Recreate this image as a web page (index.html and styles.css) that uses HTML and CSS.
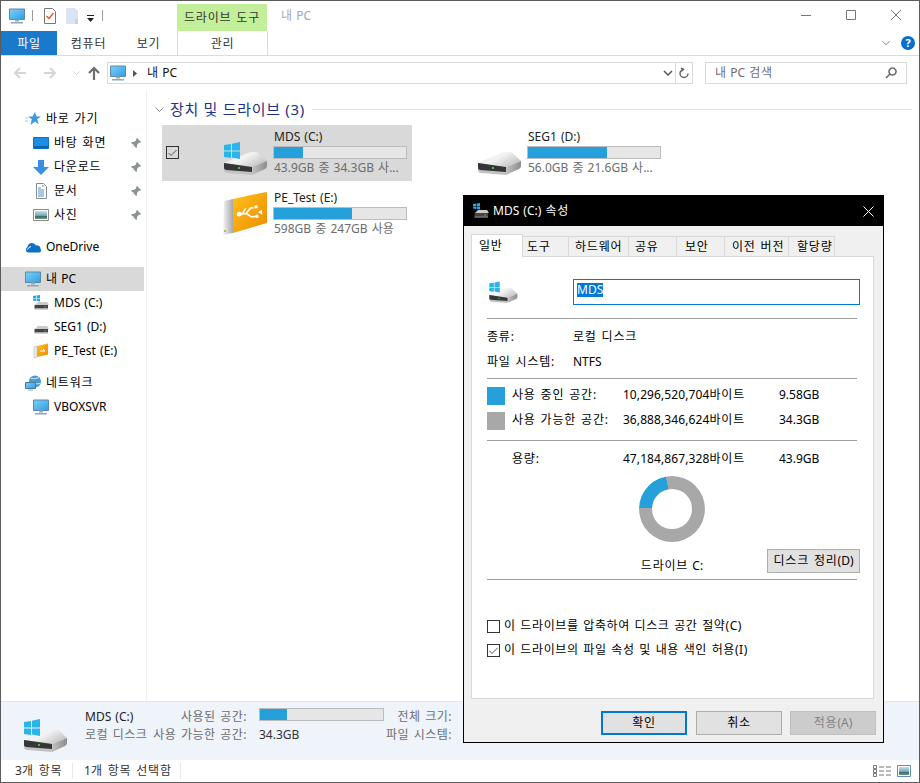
FILE: index.html
```html
<!DOCTYPE html>
<html lang="ko">
<head>
  <meta charset="UTF-8" />
  <title>내 PC</title>
  <link rel="stylesheet" href="styles.css">
</head>
<body>
  <!-- Shared icons -->
  <svg class="defs" aria-hidden="true">
    <defs>
      <linearGradient id="screen" x1="0" y1="0" x2="1" y2="1">
        <stop offset="0" stop-color="#7fd0f7" />
        <stop offset="1" stop-color="#2a9fe6" />
      </linearGradient>
      <linearGradient id="top-face" x1="0" y1="0" x2="1" y2="0.6">
        <stop offset="0" stop-color="#e2e2e2" />
        <stop offset="0.5" stop-color="#f4f4f4" />
        <stop offset="1" stop-color="#c4c4c4" />
      </linearGradient>
      <linearGradient id="side-face" x1="0" y1="0" x2="1" y2="0">
        <stop offset="0" stop-color="#c2c2c2" />
        <stop offset="1" stop-color="#8c8c8c" />
      </linearGradient>
      <linearGradient id="usb-face" x1="0" y1="0" x2="1" y2="1">
        <stop offset="0" stop-color="#ffc21a" />
        <stop offset="1" stop-color="#ee8a00" />
      </linearGradient>
      <linearGradient id="usb-spine" x1="0" y1="0" x2="1" y2="0">
        <stop offset="0" stop-color="#f4f4f4" />
        <stop offset="1" stop-color="#a8a8a8" />
      </linearGradient>
      <linearGradient id="photo" x1="0" y1="0" x2="0" y2="1">
        <stop offset="0" stop-color="#bfe0f2" />
        <stop offset="0.55" stop-color="#7fa8b8" />
        <stop offset="0.7" stop-color="#3f6b55" />
        <stop offset="1" stop-color="#6f9a88" />
      </linearGradient>
    </defs>
    <symbol id="drive" viewBox="0 0 46 38">
      <path d="M2 23 27 12.500q2-.5 4-.5l5 .5 9 8.500-15 6z" fill="url(#top-face)" />
      <path d="M30 27l15-6v5q0 2-2 3l-13 6z" fill="url(#side-face)" />
      <path d="M2 23l28 4v8L5 33q-3-.5-3-3z" fill="#c2c2c2" />
      <path d="M2 23l28 4v5L4 30q-2-.3-2-2z" fill="#363636" />
      <circle cx="17" cy="28" r="1.100" fill="#54d454" />
    </symbol>
    <symbol id="win" viewBox="0 0 46 38">
      <path d="M2 5l7-1v6.400H2zM10 3.800 18 2v8.400h-8zM2 11.400h7V18l-7-1zM10 11.400h8V19l-8-1.400z" fill="#29b4ea" />
    </symbol>
    <symbol id="usb" viewBox="0 0 46 46">
      <path d="M2 10l9-2v34l-10 2z" fill="url(#usb-spine)" />
      <path d="M11 8 44 1q1 0 1 1v29q0 1-1 1.300L11 42z" fill="url(#usb-face)" />
      <circle cx="3" cy="40" r="1" fill="#a3b21a" />
      <g transform="translate(0 -3) rotate(-6 28 24)">
        <path d="M17 25h7l5-5h3M24 25l5 4h4M20 25l4-5" fill="none" stroke="#fff" stroke-width="1.600" />
        <path d="M36 25l4-2v5zM33 18h3v3h-3z" fill="#fff" />
        <circle cx="17" cy="25" r="2.400" fill="#fff" />
        <circle cx="34.500" cy="29" r="1.800" fill="#fff" />
      </g>
    </symbol>
    <symbol id="pc" viewBox="0 0 16 15">
      <path d="M.5.500h15v10.500H.5z" fill="url(#screen)" stroke="#5c87a8" />
      <path d="M6 11h4v2H6z" fill="#9ab" />
      <path d="M2 13.500h12V15H2z" fill="#8fa6b8" />
    </symbol>
    <symbol id="pin" viewBox="0 0 10 10">
      <path d="M6 0l4 4-1 1-1-.4L6 7v2L5 10 2.800 7.200 0 10l2.800-3.200L0 5l1-1h2l2.400-2L5 1z" fill="#8b9296" />
    </symbol>
    <symbol id="small-drive" viewBox="0 0 16 16">
      <path d="M2 10l3-3h9l2 3z" fill="#c9c9c9" />
      <path d="M1.500 10h13.500v3.500H1.500z" fill="#444" />
      <path d="M1.500 13.500h13.500v1H1.500z" fill="#aaa" />
      <path d="M11.500 11.500h1.500v1h-1.500z" fill="#3fd83f" />
    </symbol>
    <symbol id="small-win" viewBox="0 0 16 16">
      <path d="M0 1l3-.4V3H0zM3.600.500 7 0v3H3.600zM0 3.600h3V6L0 5.600zM3.600 3.600H7v3L3.600 6z" fill="#20a8e8" />
    </symbol>
  </svg>

  <div class="window">
    <header class="titlebar">
      <div class="quick">
        <svg class="ico-16"><use href="#pc" /></svg>
        <span class="qsep"></span>
        <svg class="qdoc" viewBox="0 0 12 16">
          <path d="M.5.500h8l3 3v12H.5z" fill="#fff" stroke="#777" />
          <path d="M2.500 8l2.500 2.500L9.500 5" fill="none" stroke="#e2541c" stroke-width="1.300" />
        </svg>
        <svg class="qblank" viewBox="0 0 12 16">
          <path d="M0 0h9l3 3v13H0z" fill="#dbe4f2" />
          <path d="M9 11h3v5H9z" fill="#c8d2e2" />
        </svg>
        <svg class="qdrop" viewBox="0 0 7 7">
          <path d="M0 0h7v1H0zM0 3h7L3.500 7z" fill="#222" />
        </svg>
        <span class="qsep qsep-end"></span>
      </div>
      <div class="context-tab ko">드라이브 도구</div>
      <div class="window-name">내 PC</div>
      <div class="controls">
        <svg class="ctl" viewBox="0 0 10 10"><path d="M0 5.500h10" stroke="#777" fill="none" /></svg>
        <svg class="ctl" viewBox="0 0 10 10"><path d="M.5.500h9v9h-9z" stroke="#777" fill="none" /></svg>
        <svg class="ctl" viewBox="0 0 10 10"><path d="M0 0l10 10M10 0 0 10" stroke="#777" fill="none" /></svg>
      </div>
    </header>

    <nav class="ribbon">
      <div class="tab tab-file ko">파일</div>
      <div class="tab tab-computer ko">컴퓨터</div>
      <div class="tab tab-view ko">보기</div>
      <div class="tab tab-manage ko">관리</div>
      <svg class="ribbon-chevron" viewBox="0 0 8 4"><path d="M.3.300 4 3.700 7.700.300" fill="none" stroke="#8a8a8a" /></svg>
      <div class="help">?</div>
    </nav>

    <div class="navbar">
      <div class="nav-buttons">
        <svg class="nav-arrow" viewBox="0 0 12 12"><path d="M12 6H1M6 1 1 6l5 5" fill="none" stroke="#d6d6d6" stroke-width="2" /></svg>
        <svg class="nav-arrow" viewBox="0 0 12 12"><path d="M0 6h11M6 1l5 5-5 5" fill="none" stroke="#d6d6d6" stroke-width="2" /></svg>
        <svg class="nav-recent" viewBox="0 0 7 5"><path d="M.5.500 3.500 3.500 6.500.500" fill="none" stroke="#d6d6d6" /></svg>
        <svg class="nav-up" viewBox="0 0 12 14"><path d="M6 14V2M1 7l5-5 5 5" fill="none" stroke="#6e6e6e" stroke-width="2.200" /></svg>
      </div>
      <div class="address">
        <svg class="ico-16"><use href="#pc" /></svg>
        <svg class="crumb" viewBox="0 0 4 7"><path d="M0 0l4 3.500L0 7z" fill="#555" /></svg>
        <span class="address-text">내 PC</span>
        <svg class="addr-drop" viewBox="0 0 10 6"><path d="M1 1l4 4 4-4" fill="none" stroke="#555" stroke-width="1.500" /></svg>
        <div class="refresh">
          <svg viewBox="0 0 12 12" class="refresh-ico"><path d="M6 2.500a4 4 0 1 1-4 4M9 1 6.500 2.500 9 4.500" fill="none" stroke="#666" stroke-width="1.500" transform="matrix(-1 0 0 1 12 0)" /></svg>
        </div>
      </div>
      <div class="search">
        <span>내 PC <span class="ko">검색</span></span>
        <svg class="search-ico" viewBox="0 0 12 12"><path d="M7.500 1a3.500 3.500 0 1 0 .01 0zM5 7 1 11" fill="none" stroke="#666" stroke-width="1.500" /></svg>
      </div>
    </div>

    <div class="main">
      <aside class="sidebar">
        <div class="side-group">
          <div class="side-row">
            <svg class="ico-16" viewBox="0 0 16 16"><path d="M10 1l1.500 4.500H16l-3.700 2.800 1.300 5L10 10.500 5.500 14l1.300-5.700L3 5.500h4.500z" fill="#3a9be0" /><path d="M0 7h3M0 10h3" stroke="#9cc8ea" /></svg>
            <span class="ko">바로 가기</span>
          </div>
          <div class="side-row child">
            <svg class="ico-16" viewBox="0 0 16 14"><path d="M.5 1.500h15v11H.5z" fill="#1c8ee6" stroke="#0f6fc0" /><path d="M1 10h14v2H1z" fill="#0a63b0" /></svg>
            <span class="ko">바탕 화면</span>
            <svg class="pin"><use href="#pin" /></svg>
          </div>
          <div class="side-row child">
            <svg class="ico-16" viewBox="0 0 16 16"><path d="M5 1h6v7h5l-8 8-8-8h5z" fill="#3a8fe0" /></svg>
            <span class="ko">다운로드</span>
            <svg class="pin"><use href="#pin" /></svg>
          </div>
          <div class="side-row child">
            <svg class="ico-16" viewBox="0 0 16 16"><path d="M3.500.500h7l3 3v12h-10z" fill="#fff" stroke="#8a8a8a" /><path d="M5 5h3M9 3h2M5 7h6M5 9h6M5 11h6M5 13h6" stroke="#4a90c8" /></svg>
            <span class="ko">문서</span>
            <svg class="pin"><use href="#pin" /></svg>
          </div>
          <div class="side-row child">
            <svg class="ico-16" viewBox="0 0 16 14"><path d="M.5 1.500h15v11H.5z" fill="#fff" stroke="#8a8a8a" /><path d="M2 3h12v8H2z" fill="url(#photo)" /></svg>
            <span class="ko">사진</span>
            <svg class="pin"><use href="#pin" /></svg>
          </div>
        </div>
        <div class="side-group">
          <div class="side-row">
            <svg class="ico-16" viewBox="0 0 16 12"><path d="M3 11.500A3 3 0 0 1 2.500 6a4.500 4.500 0 0 1 8.500-1.500 3.500 3.500 0 0 1 4.500 3.500A2 2 0 0 1 14 11.500z" fill="#0f70c8" /><path d="M6 5.500a5 5 0 0 0-3.500 3" stroke="#fff" fill="none" /></svg>
            <span>OneDrive</span>
          </div>
        </div>
        <div class="side-group">
          <div class="side-row selected">
            <svg class="ico-16"><use href="#pc" /></svg>
            <span>내 PC</span>
          </div>
          <div class="side-row child">
            <svg class="ico-16"><use href="#small-drive" /><use href="#small-win" /></svg>
            <span>MDS (C:)</span>
          </div>
          <div class="side-row child">
            <svg class="ico-16"><use href="#small-drive" /></svg>
            <span>SEG1 (D:)</span>
          </div>
          <div class="side-row child">
            <svg class="ico-16" viewBox="0 0 16 16"><path d="M1 4l3-1v11l-3 1z" fill="#eee" stroke="#aaa" stroke-width=".5" /><path d="M4 3l11-2.500v11L4 14z" fill="url(#usb-face)" /><path d="M7 8h5M10 6l2 2" stroke="#fff" /></svg>
            <span>PE_Test (E:)</span>
          </div>
        </div>
        <div class="side-group">
          <div class="side-row">
            <svg class="ico-16" viewBox="0 0 16 15"><circle cx="10" cy="6" r="6" fill="#4a9ad0" /><path d="M6 3q4 1 8-1M7 8q3 1 8 0" stroke="#cfe6f5" fill="none" /><path d="M.5 7h10v6H.5z" fill="url(#screen)" stroke="#4a7a9a" /><path d="M3 14h5v1H3z" fill="#8fa6b8" /></svg>
            <span class="ko">네트워크</span>
          </div>
          <div class="side-row child">
            <svg class="ico-16"><use href="#pc" /></svg>
            <span>VBOXSVR</span>
          </div>
        </div>
      </aside>

      <section class="content">
        <div class="group-head">
          <svg class="group-chevron" viewBox="0 0 9 5"><path d="M.5.500l4 4 4-4" fill="none" stroke="#8a8a8a" /></svg>
          <span class="group-title">장치 및 드라이브 (3)</span>
          <span class="group-line"></span>
        </div>
        <div class="tiles">
          <div class="tile selected">
            <span class="tile-check">
              <svg viewBox="0 0 11 11"><path d="M1.500 6 4 8.500 9.500 3" fill="none" stroke="#555" /></svg>
            </span>
            <svg class="tile-icon drive-icon"><use href="#drive" /><use href="#win" /></svg>
            <div class="tile-text">
              <div class="tile-name">MDS (C:)</div>
              <div class="meter"><div class="meter-fill" style="width: 22%"></div></div>
              <div class="tile-sub">43.9GB 중 34.3GB 사...</div>
            </div>
          </div>
          <div class="tile">
            <svg class="tile-icon drive-icon"><use href="#drive" /></svg>
            <div class="tile-text">
              <div class="tile-name">SEG1 (D:)</div>
              <div class="meter"><div class="meter-fill" style="width: 60%"></div></div>
              <div class="tile-sub">56.0GB 중 21.6GB 사...</div>
            </div>
          </div>
          <div class="tile">
            <svg class="tile-icon" viewBox="0 0 46 46"><use href="#usb" /></svg>
            <div class="tile-text">
              <div class="tile-name">PE_Test (E:)</div>
              <div class="meter"><div class="meter-fill" style="width: 59%"></div></div>
              <div class="tile-sub">598GB 중 247GB 사용</div>
            </div>
          </div>
        </div>
      </section>
    </div>

    <div class="details">
      <svg class="details-icon"><use href="#drive" /><use href="#win" /></svg>
      <div class="details-col">
        <div class="d-line"><span class="d-name">MDS (C:)</span><span class="ko">사용된 공간:</span></div>
        <div class="d-line"><span class="ko">로컬 디스크</span><span class="ko">사용 가능한 공간:</span></div>
      </div>
      <div class="details-val">
        <div class="meter"><div class="meter-fill" style="width: 22%"></div></div>
        <div class="d-free">34.3GB</div>
      </div>
      <div class="details-labels ko">
        <div>전체 크기:</div>
        <div>파일 시스템:</div>
      </div>
    </div>

    <footer class="status">
      <span class="status-item status-count"><span>3</span><span class="ko">개 항목</span></span>
      <span class="status-item status-sel"><span>1</span><span class="ko">개 항목 선택함</span></span>
      <div class="views">
        <svg class="view-ico" viewBox="0 0 19 12"><path d="M.5.500h3v3h-3zM.5 8.500h3v3h-3z" fill="#fff" stroke="#777" /><path d="M.5 4.500h3v3h-3z" fill="#fff" stroke="#777" /><path d="M6 2h5M13 2h5M6 6h5M13 6h5M6 10h5M13 10h5" stroke="#777" /></svg>
        <svg class="view-pic" viewBox="0 0 14 12"><path d="M.5.500h13v11H.5z" fill="#fff" stroke="#5a8fb5" /><path d="M2 2h10v8H2z" fill="url(#photo)" /></svg>
      </div>
    </footer>
  </div>

  <!-- Properties dialog -->
  <div class="dialog">
    <div class="dlg-title">
      <svg class="dlg-title-ico"><use href="#small-drive" /><use href="#small-win" /></svg>
      <span>MDS (C:) <span class="ko">속성</span></span>
      <svg class="dlg-close" viewBox="0 0 11 11"><path d="M.5.500l10 10M10.500.500l-10 10" stroke="#fff" fill="none" /></svg>
    </div>
    <div class="dlg-body">
      <div class="dlg-tabs ko">
        <div class="dlg-tab active w-general">일반</div>
        <div class="dlg-tab w-tools">도구</div>
        <div class="dlg-tab w-hw">하드웨어</div>
        <div class="dlg-tab w-share">공유</div>
        <div class="dlg-tab w-sec">보안</div>
        <div class="dlg-tab w-prev">이전 버전</div>
        <div class="dlg-tab w-quota">할당량</div>
      </div>
      <div class="panel">
        <div class="name-row">
          <svg class="name-icon" viewBox="0 0 46 38"><use href="#drive" /><use href="#win" /></svg>
          <div class="name-input"><span class="selected-text">MDS</span></div>
        </div>
        <div class="sep sep-first"></div>
        <div class="info-row first"><span class="info-label ko">종류:</span><span class="ko">로컬 디스크</span></div>
        <div class="info-row"><span class="info-label ko">파일 시스템:</span><span>NTFS</span></div>
        <div class="sep sep-info"></div>
        <div class="stat-row first">
          <span class="swatch used"></span>
          <span class="ko">사용 중인 공간:</span>
          <span class="bytes">10,296,520,704<span class="ko">바이트</span></span>
          <span class="gb">9.58GB</span>
        </div>
        <div class="stat-row">
          <span class="swatch free"></span>
          <span class="ko">사용 가능한 공간:</span>
          <span class="bytes">36,888,346,624<span class="ko">바이트</span></span>
          <span class="gb">34.3GB</span>
        </div>
        <div class="sep sep-stat"></div>
        <div class="stat-row total">
          <span></span>
          <span class="ko">용량:</span>
          <span class="bytes">47,184,867,328<span class="ko">바이트</span></span>
          <span class="gb">43.9GB</span>
        </div>
        <div class="chart">
          <div></div>
          <div class="chart-mid">
            <div class="donut"></div>
            <div class="drive-label"><span class="ko">드라이브</span> C:</div>
          </div>
          <div class="chart-right"><button class="btn cleanup"><span class="ko">디스크 정리</span>(D)</button></div>
        </div>
        <div class="sep sep-chart"></div>
        <label class="check-row first"><span class="check"></span><span class="ko">이 드라이브를 압축하여 디스크 공간 절약(C)</span></label>
        <label class="check-row">
          <span class="check">
            <svg viewBox="0 0 11 11"><path d="M1.500 6 4 8.500 9.500 3" fill="none" stroke="#555" /></svg>
          </span><span class="ko">이 드라이브의 파일 속성 및 내용 색인 허용(I)</span></label>
      </div>
      <div class="dlg-buttons">
        <button class="btn dlg-btn default ko">확인</button>
        <button class="btn dlg-btn ko">취소</button>
        <button class="btn dlg-btn disabled"><span class="ko">적용</span>(A)</button>
      </div>
    </div>
  </div>
</body>
</html>
```

FILE: styles.css
```css
* {
  box-sizing: border-box;
}

body {
  margin: 0;
  width: 920px;
  height: 783px;
  overflow: hidden;
  position: relative;
  background: #fff;
  color: #000;
  font-family: "Noto Sans", "Noto Sans CJK KR", sans-serif;
  font-size: 12px;
  line-height: 16px;
  word-spacing: 1px;
}

svg {
  display: block;
  flex: none;
}

/* hangul runs are a little wider in the original UI font */
.ko {
  letter-spacing: 0.8px;
}

.defs {
  position: absolute;
  width: 0;
  height: 0;
}

.ico-16 {
  width: 16px;
  height: 16px;
}

.window {
  height: 783px;
  display: flex;
  flex-direction: column;
  border: 1px solid #5b5b5b;
}

/* title bar */
.titlebar {
  height: 30px;
  display: flex;
  flex: none;
}

.quick {
  width: 176px;
  padding: 7px 0 0 8px;
  display: flex;
  align-items: flex-start;
}

.qsep {
  width: 1px;
  height: 11px;
  margin: 2px 0 0 7px;
  background: #9a9a9a;
}

.qsep-end {
  margin-left: 8px;
}

.qdoc {
  width: 12px;
  height: 16px;
  margin-left: 11px;
}

.qblank {
  width: 12px;
  height: 16px;
  margin-left: 10px;
}

.qdrop {
  width: 7px;
  height: 7px;
  margin: 7px 0 0 9px;
}

.context-tab {
  width: 90px;
  margin-top: 3px;
  background: #c3ef9b;
  color: #333;
  text-align: center;
  line-height: 27px;
}

.window-name {
  margin-left: 14px;
  color: #a9a9a9;
  line-height: 30px;
}

.controls {
  margin-left: auto;
  padding: 9px 18px 0 0;
  display: flex;
  gap: 35px;
}

.ctl {
  width: 10px;
  height: 10px;
}

/* ribbon tabs */
.ribbon {
  height: 25px;
  flex: none;
  display: flex;
  align-items: flex-start;
  border-bottom: 1px solid #dadbdc;
}

.tab {
  height: 24px;
  line-height: 25px;
  text-align: center;
  color: #333;
}

.tab-file {
  width: 56px;
  background: #1979ca;
  color: #fff;
}

.tab-computer {
  width: 63px;
}

.tab-view {
  width: 57px;
}

.tab-manage {
  width: 91px;
  border-left: 1px solid #dadbdc;
  border-right: 1px solid #dadbdc;
}

.ribbon-chevron {
  width: 8px;
  height: 4px;
  margin: 10px 0 0 614px;
}

.help {
  width: 14px;
  height: 14px;
  margin: 5px 0 0 11px;
  border-radius: 50%;
  background: #0a6ecb;
  color: #fff;
  font-weight: 700;
  font-size: 11px;
  line-height: 14px;
  text-align: center;
}

/* address row */
.navbar {
  height: 34px;
  flex: none;
  display: flex;
  padding-top: 6px;
}

.nav-buttons {
  width: 106px;
  padding: 4px 0 0 13px;
  display: flex;
  align-items: flex-start;
}

.nav-arrow {
  width: 12px;
  height: 12px;
  margin-right: 18px;
  margin-top: 1px;
}

.nav-recent {
  width: 7px;
  height: 5px;
  margin: 5px 0 0 -1px;
}

.nav-up {
  width: 12px;
  height: 14px;
  margin-left: 8px;
}

.address {
  width: 586px;
  height: 22px;
  border: 1px solid #d9d9d9;
  display: flex;
  align-items: center;
  padding-left: 2px;
}

.crumb {
  width: 4px;
  height: 7px;
  margin-left: 7px;
}

.address-text {
  margin-left: 10px;
  color: #111;
}

.addr-drop {
  width: 10px;
  height: 6px;
  margin-left: auto;
  margin-right: 2px;
}

.refresh {
  width: 17px;
  height: 20px;
  border-left: 1px solid #d9d9d9;
  display: flex;
  align-items: center;
  justify-content: center;
}

.refresh-ico {
  width: 12px;
  height: 12px;
}

.search {
  width: 202px;
  height: 22px;
  margin-left: 12px;
  border: 1px solid #d9d9d9;
  padding: 0 9px;
  display: flex;
  align-items: center;
  justify-content: space-between;
  color: #6d6d6d;
}

.search-ico {
  width: 12px;
  height: 12px;
}

/* main area */
.main {
  flex: 1;
  display: flex;
  min-height: 0;
}

.sidebar {
  width: 146px;
  flex: none;
  padding-top: 17px;
  border-right: 1px solid #f0f0f0;
}

.side-group {
  margin-bottom: 8px;
}

.side-row {
  height: 24px;
  margin-right: 2px;
  padding: 0 3px 0 24px;
  display: flex;
  align-items: center;
  gap: 5px;
}

.side-row.child {
  padding-left: 32px;
}

.side-row.selected {
  background: #d9d9d9;
}

.pin {
  width: 10px;
  height: 10px;
  margin-left: auto;
}

.content {
  flex: 1;
  padding: 10px 0 0 8px;
}

.group-head {
  height: 18px;
  display: flex;
  align-items: center;
}

.group-chevron {
  width: 9px;
  height: 5px;
}

.group-title {
  margin-left: 6px;
  color: #1e3287;
  font-size: 15px;
  letter-spacing: 0.7px;
  word-spacing: 0;
}

.group-line {
  flex: 1;
  height: 1px;
  margin: 0 7px 0 7px;
  background: #e2e2e2;
}

.tiles {
  margin: 7px 0 0 7px;
  display: grid;
  grid-template-columns: 250px 250px;
  grid-auto-rows: 56px;
  column-gap: 4px;
  row-gap: 5px;
}

.tile {
  position: relative;
  padding-left: 60px;
  display: flex;
  align-items: center;
  gap: 5px;
}

.tile.selected {
  background: #d9d9d9;
}

.tile-check {
  position: absolute;
  left: 4px;
  top: 21px;
  width: 13px;
  height: 13px;
  border: 1px solid #333;
}

.tile-icon {
  width: 46px;
  height: 46px;
}

.drive-icon {
  margin-top: 12px;
}

.tile-text {
  width: 134px;
  align-self: flex-start;
  padding-top: 4px;
}

.tile-name {
  margin-left: 1px;
  margin-bottom: 1px;
  color: #222;
}

.tile-sub {
  margin-left: 1px;
  margin-top: 1px;
  color: #6d6d6d;
}

.meter {
  height: 13px;
  border: 1px solid #bcbcbc;
  background: #e6e6e6;
}

.meter-fill {
  height: 100%;
  background: #26a0da;
}

/* details pane */
.details {
  height: 59px;
  flex: none;
  display: flex;
  padding: 6px 0 0 21px;
  background: #eff3fa;
  border-top: 1px solid #dde6f3;
  color: #6d6d6d;
  line-height: 18px;
  white-space: nowrap;
}

.details .ko {
  letter-spacing: 0.5px;
}

.details-icon {
  width: 46px;
  height: 46px;
  margin: 5px 17px 0 0;
}

.details-col {
  width: 162px;
}

.d-line {
  display: flex;
  justify-content: space-between;
}

.d-name {
  color: #222;
}

.details-val {
  width: 125px;
  margin-left: 12px;
}

.d-free {
  margin-top: 5px;
  color: #333;
}

.details-labels {
  width: 80px;
  margin-left: -12px;
  text-align: right;
  letter-spacing: 0.5px;
}

/* status bar */
.status {
  height: 22px;
  flex: none;
  display: flex;
  align-items: center;
  padding-left: 14px;
  color: #333;
}

.status-item {
  border-right: 1px solid #e8e8e8;
  margin-right: 11px;
}

.status-count {
  width: 58px;
}

.status-sel {
  width: 97px;
}

.views {
  margin-left: auto;
  padding-right: 8px;
  display: flex;
  align-items: center;
  gap: 5px;
}

.view-ico {
  width: 19px;
  height: 12px;
}

.view-pic {
  width: 14px;
  height: 12px;
}

/* properties dialog */
.dialog {
  position: absolute;
  left: 463px;
  top: 195px;
  width: 421px;
  height: 548px;
  border: 1px solid #000;
  background: #f0f0f0;
  display: flex;
  flex-direction: column;
}

.dlg-title {
  height: 30px;
  flex: none;
  background: #000;
  color: #fff;
  display: flex;
  align-items: center;
  padding: 0 9px;
}

.dlg-title-ico {
  width: 16px;
  height: 16px;
  margin-right: 4px;
}

.dlg-close {
  width: 11px;
  height: 11px;
  margin-left: auto;
}

.dlg-body {
  flex: 1;
  padding: 8px 7px 0 7px;
}

.dlg-tabs {
  height: 22px;
  display: flex;
  align-items: flex-end;
  position: relative;
  z-index: 1;
}

.dlg-tab {
  height: 20px;
  border: 1px solid #d9d9d9;
  border-left: 0;
  border-bottom: 0;
  background: #f0f0f0;
  line-height: 20px;
  white-space: nowrap;
}

.dlg-tab.active {
  height: 23px;
  margin-bottom: -1px;
  border-left: 1px solid #d9d9d9;
  background: #fff;
  line-height: 21px;
}

.w-general { width: 52px; padding-left: 7px; }
.w-tools { width: 46px; padding-left: 4px; }
.w-hw { width: 60px; padding-left: 6px; }
.w-share { width: 48px; padding-left: 6px; }
.w-sec { width: 48px; padding-left: 8px; }
.w-prev { width: 64px; padding-left: 7px; }
.w-quota { width: 46px; padding-left: 8px; }

.panel {
  height: 443px;
  margin-right: 2px;
  background: #fff;
  border: 1px solid #d9d9d9;
  padding: 22px 13px 0 15px;
}

.name-row {
  display: flex;
  align-items: center;
}

.name-icon {
  width: 30px;
  height: 25px;
  margin: 0 55px 0 1px;
}

.name-input {
  flex: 1;
  height: 26px;
  border: 1px solid #0078d7;
  padding: 3px 3px;
}

.selected-text {
  display: inline-block;
  height: 14px;
  line-height: 14px;
  background: #0078d7;
  color: #fff;
  vertical-align: top;
}

.sep {
  height: 1px;
  margin-right: 3px;
  background: #a0a0a0;
}

.sep-first {
  margin-top: 13px;
}

.sep-info {
  margin-top: 4px;
}

.sep-stat {
  margin-top: 8px;
}

.sep-chart {
  margin-top: 6px;
}

.info-row {
  height: 25px;
  display: flex;
  align-items: center;
}

.info-row.first {
  margin-top: 5px;
}

.info-label {
  width: 86px;
}

.stat-row {
  height: 25px;
  display: grid;
  grid-template-columns: 25px 98px 135px 1fr;
  align-items: center;
  white-space: nowrap;
}

.stat-row.first {
  margin-top: 3px;
}

.stat-row.total {
  height: 24px;
  margin-top: 6px;
}

.swatch {
  width: 18px;
  height: 18px;
  margin-top: 3px;
}

.swatch.used {
  background: #26a0da;
}

.swatch.free {
  background: #a8a8a8;
}

.bytes {
  text-align: right;
  letter-spacing: 0.1px;
}

.gb {
  padding-left: 34px;
}

.chart {
  margin-top: 5px;
  height: 97px;
  display: grid;
  grid-template-columns: 119px 132px 1fr;
}

.chart-mid {
  display: flex;
  flex-direction: column;
  align-items: center;
}

.donut {
  width: 66px;
  height: 66px;
  border-radius: 50%;
  background: conic-gradient(#a8a8a8 0 75.500%, #26a0da 75.500% 97%, #a8a8a8 97%);
  display: flex;
  align-items: center;
  justify-content: center;
}

.donut::after {
  content: "";
  width: 40px;
  height: 40px;
  border-radius: 50%;
  background: #fff;
}

.drive-label {
  margin-top: 16px;
}

.chart-right {
  display: flex;
  justify-content: flex-end;
  align-items: flex-end;
  padding-bottom: 1px;
}

.btn {
  font: inherit;
  word-spacing: inherit;
  color: #000;
  height: 24px;
  padding: 0;
  background: #e1e1e1;
  border: 1px solid #adadad;
}

.cleanup {
  width: 93px;
  white-space: nowrap;
}

.check-row {
  height: 24px;
  display: flex;
  align-items: center;
  gap: 4px;
}

.check-row .ko {
  letter-spacing: 0.6px;
}

.check-row.first {
  margin-top: 34px;
}

.check {
  width: 13px;
  height: 13px;
  border: 1px solid #333;
  background: #fff;
}

.dlg-buttons {
  margin-top: 12px;
  display: flex;
  justify-content: flex-end;
}

.dlg-btn {
  width: 86px;
  margin-left: 9px;
}

.dlg-btn.disabled {
  margin-left: 8px;
  background: #ccc;
  border-color: #bfbfbf;
  color: #838383;
}

.dlg-btn.default {
  border: 2px solid #0078d7;
}
```
